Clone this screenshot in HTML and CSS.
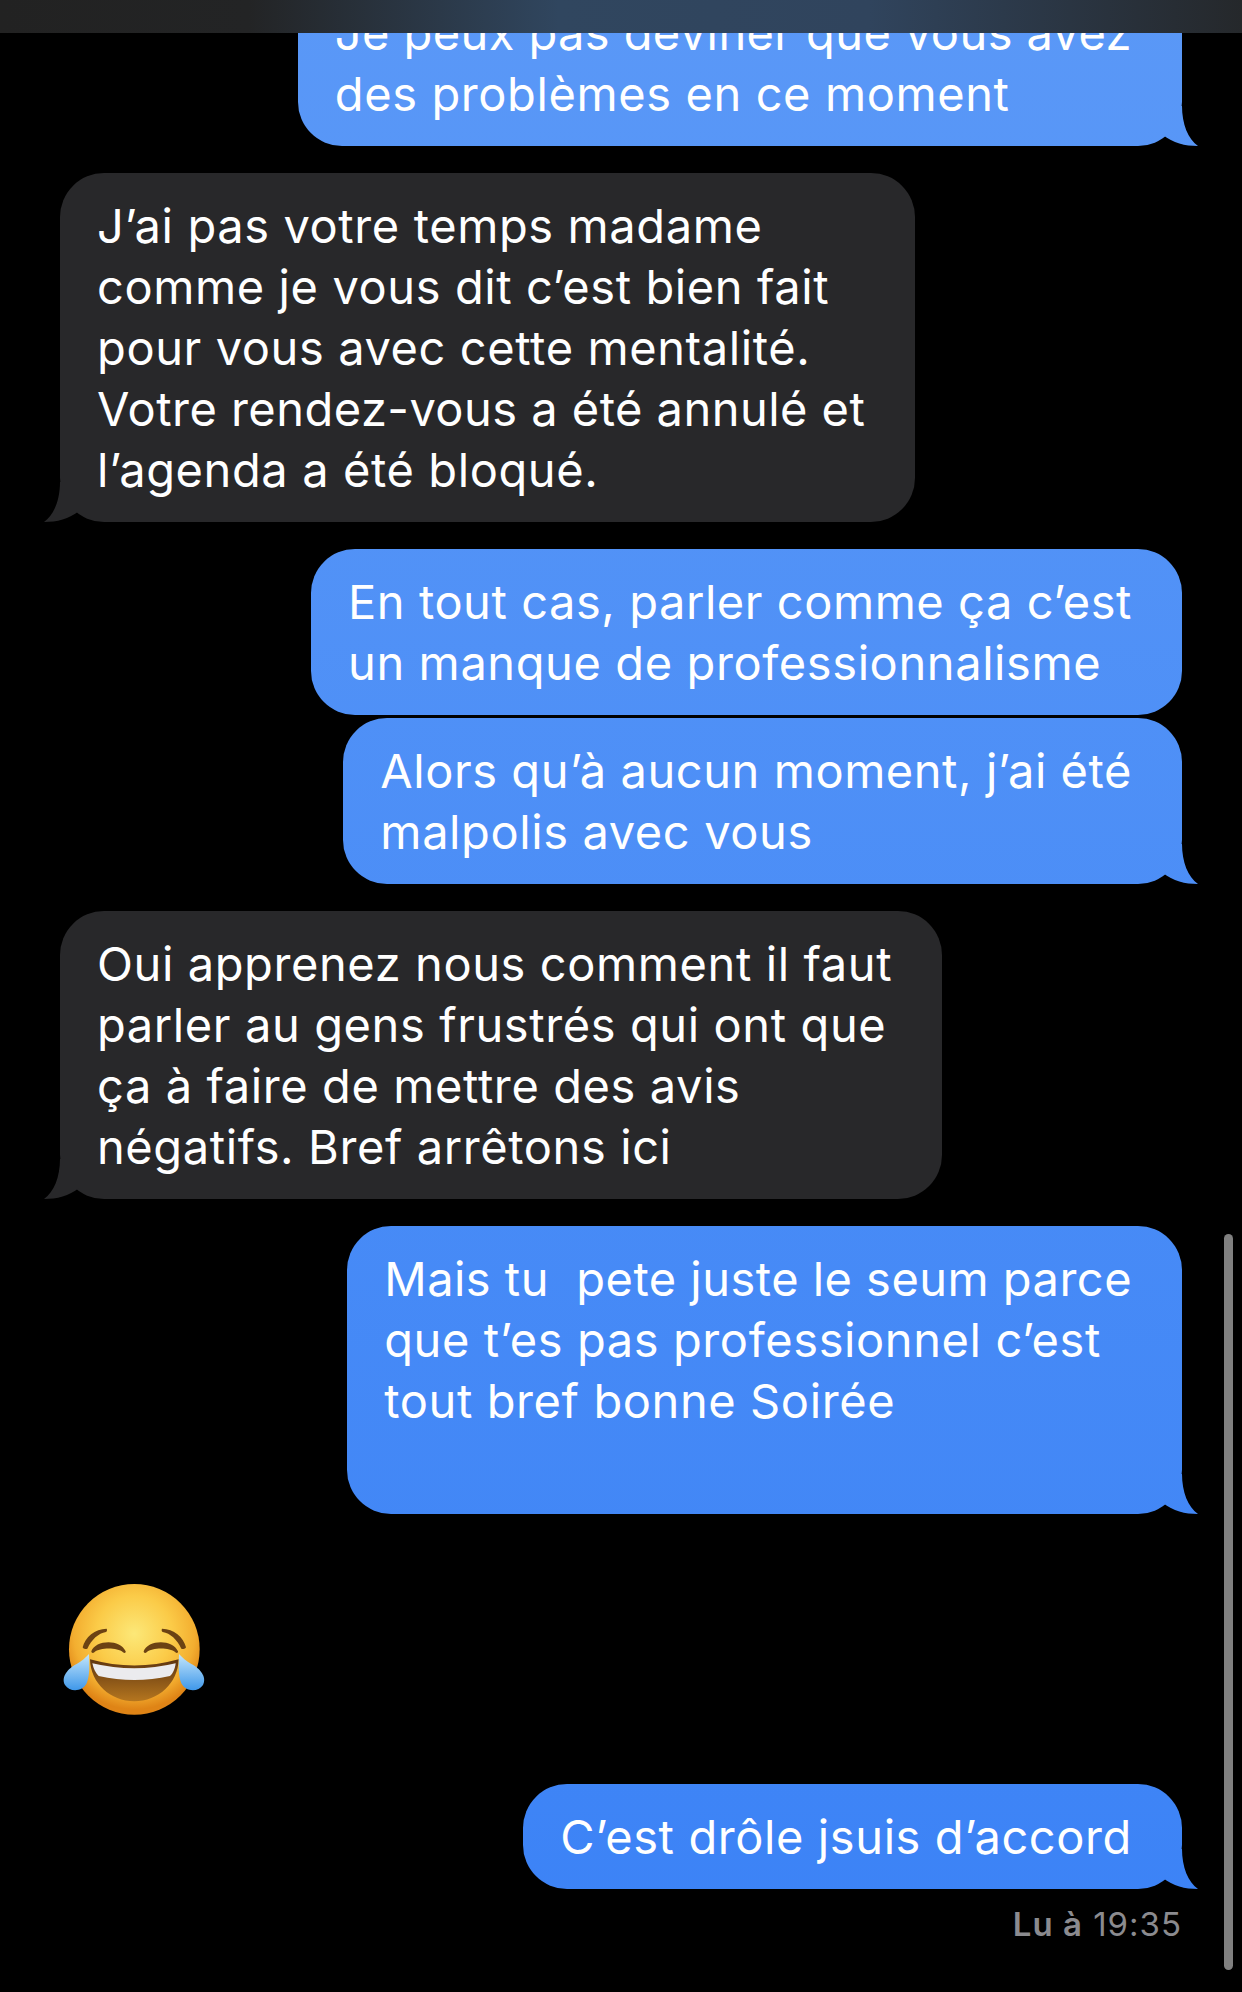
FILE: index.html
```html
<!DOCTYPE html>
<html>
<head>
    <link rel="stylesheet" href="styles.css">
</head>
<body>
    <div class="top-bar"></div>
    <div class="thread">
        <div class="bubble sent tail"><span class="tighter">Je peux pas deviner que vous avez</span><br>des problèmes en ce moment</div>
        <div class="bubble received tail">J’ai pas votre temps madame<br>comme je vous dit c’est bien fait<br>pour vous avec cette mentalité.<br><span class="tight">Votre rendez-vous a été annulé et</span><br>l’agenda a été bloqué.</div>
        <div class="bubble sent"><span class="wide">En tout cas, parler comme ça c’est</span><br>un manque de professionnalisme</div>
        <div class="bubble sent tail next"><span class="wide">Alors qu’à aucun moment, j’ai été</span><br>malpolis avec vous</div>
        <div class="bubble received tail">Oui apprenez nous comment il faut<br>parler au gens frustrés qui ont que<br>ça à faire de mettre des avis<br>négatifs. Bref arrêtons ici</div>
        <div class="bubble sent tail"><span class="tight">Mais tu&nbsp; pete juste le seum parce</span><br>que t’es pas professionnel c’est<br>tout bref bonne Soirée<br>&nbsp;</div>
        <svg class="emoji" viewBox="0 0 600 540" width="200" height="180">
            <defs>
                <radialGradient id="face" cx="50%" cy="38%" r="58%">
                    <stop offset="0" stop-color="#fce878"/>
                    <stop offset="0.5" stop-color="#fbcb48"/>
                    <stop offset="0.8" stop-color="#f3ae30"/>
                    <stop offset="1" stop-color="#df8416"/>
                </radialGradient>
                <linearGradient id="mouth" x1="0" y1="0" x2="0" y2="1">
                    <stop offset="0" stop-color="#5e3510"/>
                    <stop offset="1" stop-color="#b5761f"/>
                </linearGradient>
                <linearGradient id="tear" x1="0" y1="0" x2="0" y2="1">
                    <stop offset="0" stop-color="#c4e6fb"/>
                    <stop offset="1" stop-color="#3f98ea"/>
                </linearGradient>
            </defs>
            <circle cx="313" cy="268" r="196" fill="url(#face)"/>
            <path d="M158 262 C165 232 195 206 230 206 C232 210 231 214 228 216 C205 220 185 238 172 266 C165 268 160 267 158 262Z" fill="#6b4213"/>
            <path d="M468 262 C461 232 431 206 396 206 C394 210 395 214 398 216 C421 220 441 238 454 266 C461 268 466 267 468 262Z" fill="#6b4213"/>
            <path d="M184 274 C195 240 270 235 287 274 C288 279 283 280 279 277 C262 262 210 262 193 277 C189 280 184 279 184 274Z" fill="#6b4213"/>
            <path d="M341 274 C352 240 427 235 444 274 C445 279 440 280 436 277 C419 262 367 262 350 277 C346 280 341 279 341 274Z" fill="#6b4213"/>
            <path d="M180 298 Q313 335 446 298 C444 370 385 424 313 424 C241 424 182 370 180 298Z" fill="url(#mouth)"/>
            <path d="M187 310 Q313 340 437 310 C435 328 428 342 420 348 Q313 372 206 348 C197 340 190 326 187 310Z" fill="#ebebee"/>
            <path d="M177 282 C178 320 180 345 170 370 C158 395 120 398 105 375 C92 350 115 325 140 312 C155 304 168 292 177 282Z" fill="url(#tear)"/>
            <path d="M447 282 C446 320 444 345 454 370 C466 395 504 398 519 375 C532 350 509 325 484 312 C469 304 456 292 447 282Z" fill="url(#tear)"/>
        </svg>
        <div class="bubble sent tail last">C’est drôle jsuis d’accord</div>
        <div class="read-status"><b>Lu à</b> 19:35</div>
    </div>
    <div class="scroll-thumb"></div>
</body>
</html>
```

FILE: styles.css
```css
body {
    margin: 0;
    width: 1242px;
    height: 1992px;
    overflow: hidden;
    background-color: #000;
    font-family: 'Inter', 'Liberation Sans', sans-serif;
    color: #fff;
}

.top-bar {
    position: absolute;
    top: 0;
    left: 0;
    z-index: 2;
    width: 100%;
    height: 33px;
    background: linear-gradient(90deg, #222 0%, #232425 20%, #30465f 45%, #30445d 70%, #25282b 100%);
}

.thread {
    display: flex;
    flex-direction: column;
    margin-top: -20px;
    padding: 0 60px 0 60px;
}

.bubble {
    position: relative;
    box-sizing: border-box;
    width: fit-content;
    padding: 22px 50px 22px 37px;
    border-radius: 44px;
    font-size: 47px;
    line-height: 61px;
    white-space: nowrap;
    letter-spacing: 0.6px;
    margin-top: 27px;
}

.wide {
    letter-spacing: 0.55px;
}

.tight {
    letter-spacing: 0.47px;
}

.tighter {
    letter-spacing: 0.41px;
}

.sent {
    align-self: flex-end;
    background: linear-gradient(#5a98f7, #3b82f6) fixed;
}

.received {
    align-self: flex-start;
    background-color: #28282a;
}

.thread > .bubble:first-child {
    margin-top: 0;
}

.thread > .next {
    margin-top: 3px;
}

/* little hook at the bottom corner */
.tail::after {
    content: "";
    position: absolute;
    bottom: 0;
    width: 70px;
    height: 40px;
    clip-path: path("M54 0 C54 18 60 33 70 40 C57 40 45 37 35 29 L35 0 Z");
}

.sent.tail::after {
    right: -16px;
    background: linear-gradient(#5a98f7, #3b82f6) fixed;
}

.received.tail::after {
    left: -16px;
    background-color: #28282a;
    transform: scaleX(-1);
}

.emoji {
    display: block;
    margin: 46px 0 18px -30px;
}

.thread > .last {
    margin-top: 26px;
}

.read-status {
    align-self: flex-end;
    margin-top: 15px;
    font-size: 33px;
    line-height: 40px;
    letter-spacing: 1px;
    color: #8b8b8f;
}

.read-status b {
    font-weight: 600;
}

.scroll-thumb {
    position: absolute;
    top: 1234px;
    left: 1224px;
    width: 9px;
    height: 736px;
    border-radius: 5px;
    background-color: #808080;
}
```
